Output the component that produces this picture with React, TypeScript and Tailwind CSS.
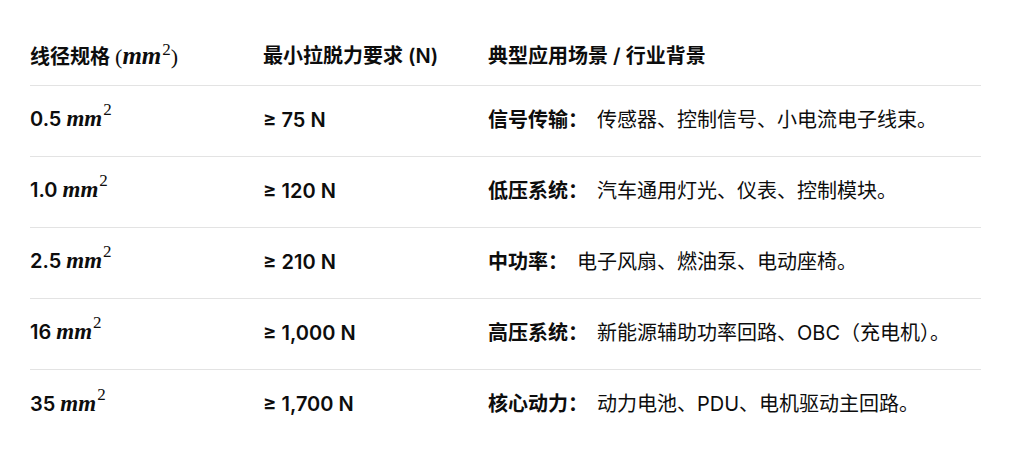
import React from "react";

const sans = '"Inter", "Noto Sans CJK SC", sans-serif';

function MM({ big }: { big?: boolean }) {
  return (
    <span className="font-['Liberation_Serif',serif] whitespace-nowrap">
      <span className={`italic font-semibold ${big ? "text-[25px]" : "text-[23px]"}`}>mm</span>
      <span
        className={`font-normal relative ${
          big ? "text-[17px] -top-[9px] ml-[1px]" : "text-[17px] -top-[11px] ml-[1px]"
        }`}
      >
        2
      </span>
    </span>
  );
}

const rows = [
  { size: "0.5", force: "≥ 75 N", label: "信号传输：", desc: "传感器、控制信号、小电流电子线束。" },
  { size: "1.0", force: "≥ 120 N", label: "低压系统：", desc: "汽车通用灯光、仪表、控制模块。" },
  { size: "2.5", force: "≥ 210 N", label: "中功率：", desc: "电子风扇、燃油泵、电动座椅。" },
  { size: "16", force: "≥ 1,000 N", label: "高压系统：", desc: "新能源辅助功率回路、OBC（充电机）。" },
  { size: "35", force: "≥ 1,700 N", label: "核心动力：", desc: "动力电池、PDU、电机驱动主回路。" },
];

export default function App() {
  return (
    <div
      className="w-[1014px] h-[449px] bg-white text-[#0d0d0d] pt-[26px] pl-[30px] overflow-hidden"
      style={{ fontFamily: sans }}
    >
      <div className="w-[951px] text-[20px]">
        <div className="grid grid-cols-[233px_225px_1fr] h-[60px] items-center border-b border-[#e3e3e3] font-semibold">
          <div className="whitespace-nowrap">
            线径规格{" "}
            <span className="font-['Liberation_Serif',serif] font-normal text-[22px]">
              (<MM big />)
            </span>
          </div>
          <div className="whitespace-nowrap">最小拉脱力要求 (N)</div>
          <div className="whitespace-nowrap">典型应用场景 / 行业背景</div>
        </div>
        {rows.map((r, i) => (
          <div
            key={i}
            className={`grid grid-cols-[233px_225px_1fr] h-[71px] items-center pb-[3px] ${
              i < rows.length - 1 ? "border-b border-[#e3e3e3]" : ""
            }`}
          >
            <div className="font-semibold whitespace-nowrap">
              {r.size} <MM />
            </div>
            <div className="font-semibold whitespace-nowrap">{r.force}</div>
            <div className="whitespace-nowrap">
              <span className="font-semibold">{r.label}</span>
              <span className="ml-[9px]">{r.desc}</span>
            </div>
          </div>
        ))}
      </div>
    </div>
  );
}
